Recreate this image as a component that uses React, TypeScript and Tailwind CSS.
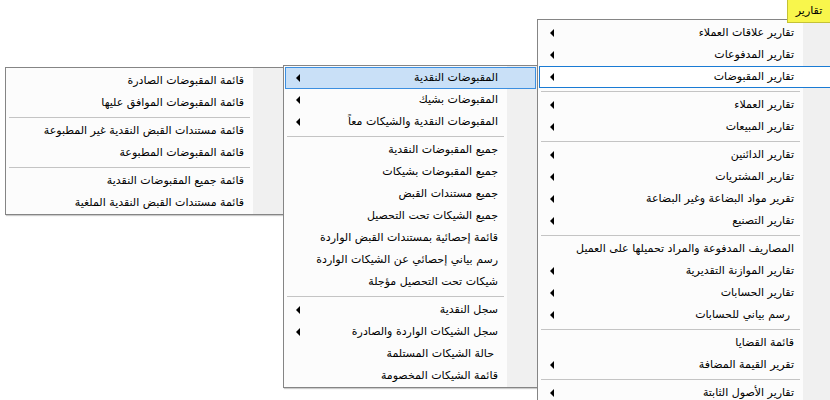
import React from 'react';

type Item = { label: string; arrow?: boolean; sep?: boolean; active?: boolean; inset?: boolean };

const mainItems: Item[] = [
  { label: 'تقارير علاقات العملاء', arrow: true },
  { label: 'تقارير المدفوعات', arrow: true },
  { label: 'تقارير المقبوضات', arrow: true, active: true },
  { sep: true, label: '' },
  { label: 'تقارير العملاء', arrow: true },
  { label: 'تقارير المبيعات', arrow: true },
  { sep: true, label: '' },
  { label: 'تقارير الدائنين', arrow: true },
  { label: 'تقارير المشتريات', arrow: true },
  { label: 'تقرير مواد البضاعة وغير البضاعة', arrow: true },
  { label: 'تقارير التصنيع', arrow: true },
  { sep: true, label: '' },
  { label: 'المصاريف المدفوعة والمراد تحميلها على العميل' },
  { label: 'تقارير الموازنة التقديرية', arrow: true },
  { label: 'تقارير الحسابات', arrow: true },
  { label: 'رسم بياني للحسابات', arrow: true, inset: true },
  { sep: true, label: '' },
  { label: 'قائمة القضايا' },
  { label: 'تقرير القيمة المضافة', arrow: true },
  { sep: true, label: '' },
  { label: 'تقارير الأصول الثابتة', arrow: true },
];

const receiptItems: Item[] = [
  { label: 'المقبوضات النقدية', arrow: true, active: true },
  { label: 'المقبوضات بشيك', arrow: true },
  { label: 'المقبوضات النقدية والشيكات معاً', arrow: true },
  { sep: true, label: '' },
  { label: 'جميع المقبوضات النقدية' },
  { label: 'جميع المقبوضات بشيكات' },
  { label: 'جميع مستندات القبض' },
  { label: 'جميع الشيكات تحت التحصيل' },
  { label: 'قائمة إحصائية بمستندات القبض الواردة' },
  { label: 'رسم بياني إحصائي عن الشيكات الواردة' },
  { label: 'شيكات تحت التحصيل مؤجلة' },
  { sep: true, label: '' },
  { label: 'سجل النقدية', arrow: true },
  { label: 'سجل الشيكات الواردة والصادرة', arrow: true },
  { label: 'حالة الشيكات المستلمة', inset: true },
  { label: 'قائمة الشيكات المخصومة' },
];

const cashItems: Item[] = [
  { label: 'قائمة المقبوضات الصادرة' },
  { label: 'قائمة المقبوضات الموافق عليها' },
  { sep: true, label: '' },
  { label: 'قائمة مستندات القبض النقدية غير المطبوعة' },
  { label: 'قائمة المقبوضات المطبوعة' },
  { sep: true, label: '' },
  { label: 'قائمة جميع المقبوضات النقدية' },
  { label: 'قائمة مستندات القبض النقدية الملغية' },
];

function Arrow() {
  return <span className="block h-0 w-0 border-y-[4px] border-r-[4px] border-y-transparent border-r-black" />;
}

function MenuRow({ item, activeStyle }: { item: Item; activeStyle: 'outline' | 'fill' }) {
  if (item.sep) {
    return (
      <div className="flex h-[6px] items-center pl-[3px] pr-[33px]">
        <div className="h-px w-full bg-[#c4c4c4]" />
      </div>
    );
  }
  const active = item.active
    ? activeStyle === 'outline'
      ? 'border border-[#1a7bd4] bg-white'
      : 'border border-[#3c8fe0] bg-[#c9e0f7]'
    : 'border border-transparent';
  return (
    <div className={`mx-[1px] flex h-[22px] items-center justify-between ${active}`}>
      <span className={`whitespace-nowrap ${item.inset ? 'pr-[41px]' : 'pr-[37px]'}`}>{item.label}</span>
      <span className="pl-[10px]">{item.arrow && <Arrow />}</span>
    </div>
  );
}

function Menu({ items, className, activeStyle }: { items: Item[]; className: string; activeStyle: 'outline' | 'fill' }) {
  return (
    <div
      dir="rtl"
      className={`absolute flex flex-col border border-[#858585] bg-[linear-gradient(to_left,#f0f0f0_30px,#fcfcfc_30px)] text-[11px] text-black shadow-[1px_1px_1px_rgba(0,0,0,0.2)] ${className}`}
    >
      {items.map((item, i) => (
        <MenuRow key={i} item={item} activeStyle={activeStyle} />
      ))}
    </div>
  );
}

export default function App() {
  return (
    <div
      className="relative h-[400px] w-[830px] overflow-hidden bg-white"
      style={{ fontFamily: 'Tahoma, "DejaVu Sans", sans-serif' }}
    >
      <div className="relative z-40 flex justify-end">
        <div className="flex h-[23px] w-[43px] items-center justify-center border-b border-l border-[#c4c236] bg-[#f8f64c] text-[11px] text-black">
          تقارير
        </div>
      </div>

      <Menu items={mainItems} activeStyle="outline" className="left-[537px] top-[19px] z-30 w-[297px] pt-[2px]" />
      <Menu items={receiptItems} activeStyle="fill" className="left-[283px] top-[65px] z-20 w-[255px] pt-[1px]" />
      <Menu items={cashItems} activeStyle="fill" className="left-[5px] top-[67px] z-10 w-[279px] pt-[2px]" />
    </div>
  );
}
